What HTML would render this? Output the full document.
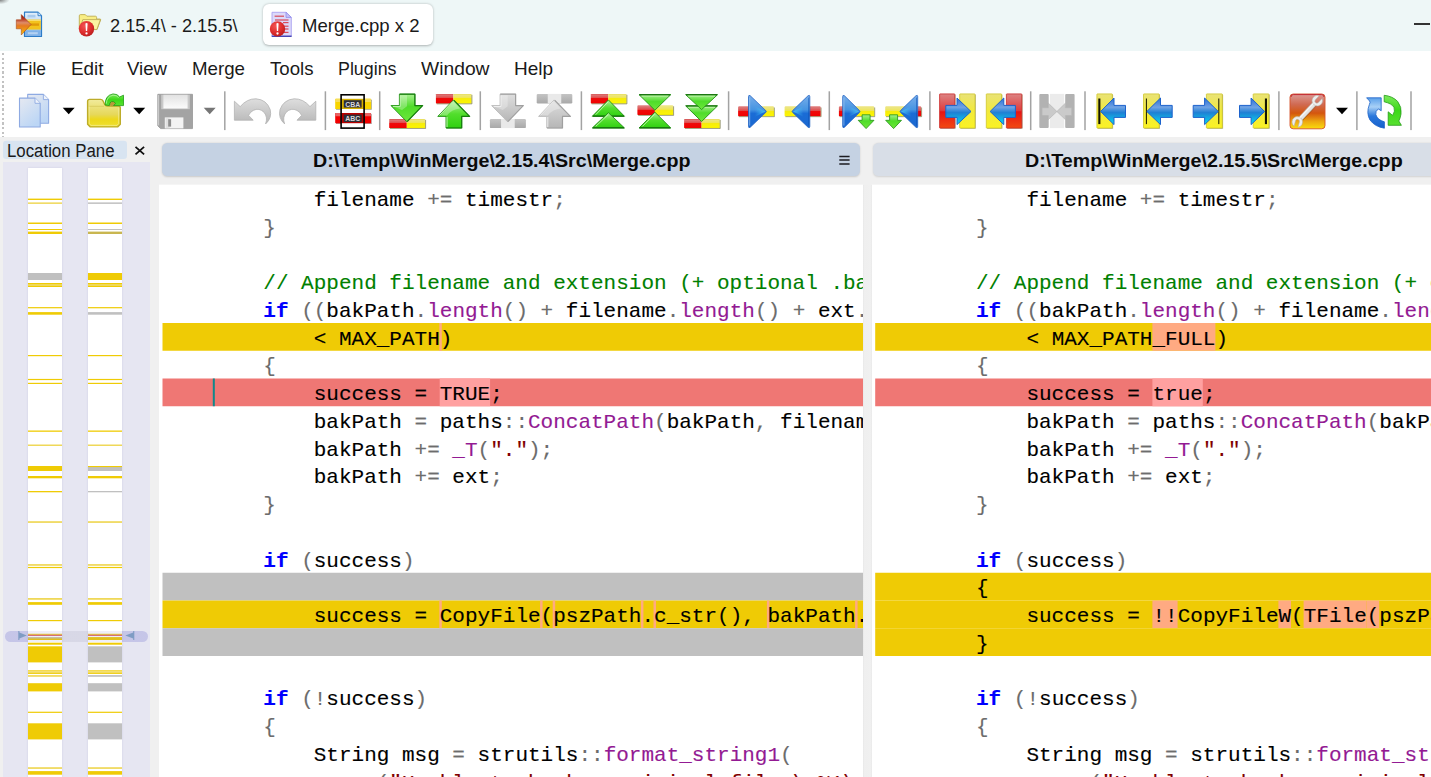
<!DOCTYPE html>
<html><head><meta charset="utf-8"><title>WinMerge</title>
<style>
html,body{margin:0;padding:0;}
body{width:1431px;height:777px;overflow:hidden;background:#f0f0f0;position:relative;font-family:"Liberation Sans",sans-serif;}
.a{position:absolute;}
.t{position:absolute;white-space:pre;transform-origin:0 0;font-family:"Liberation Sans",sans-serif;}
.sep{position:absolute;top:91.5px;height:38.5px;width:1.4px;background:#a9a9a9;}
.pane{position:absolute;top:184px;height:600px;overflow:hidden;}
.ln{-webkit-text-stroke:0.12px currentColor;position:absolute;left:0;width:900px;height:27.75px;line-height:27.75px;font-family:"Liberation Mono",monospace;font-size:21px;white-space:pre;color:#000;}
.ln i{font-style:normal;position:relative;top:2.6px;}
.ln b{font-weight:normal;position:relative;top:1.6px;}
.k{color:#0000ff;font-weight:bold !important;}
.o{color:#6c6c6c;}
.f{color:#931a93;}
.s{color:#800000;}
.c{color:#008000;}
.Y{background:#efcb05;}
.R{background:#ef7774;}
.G{background:#c0c0c0;}
.w{background:#ffa0a0;padding:3.58px 0 0.37px 0;}
.d{background:#ffaa82;padding:3.58px 0 0.37px 0;}
.ic{position:absolute;overflow:visible;}
</style></head><body>

<div class="a" style="left:0;top:0;width:1431px;height:51px;background:#eef7f7;"></div>
<div class="a" style="left:0;top:0;width:9px;height:4px;background:radial-gradient(ellipse at 0 0, rgba(80,80,80,0.7) 0, rgba(80,80,80,0.25) 45%, rgba(80,80,80,0) 75%);"></div>
<div class="a" style="left:262.5px;top:3.7px;width:170px;height:41.6px;background:#fff;border-radius:6px;box-shadow:0 0.5px 2.5px rgba(0,0,0,0.28);"></div>
<div class="t" style="left:110.30px;top:14.96px;font-size:18.5px;line-height:21.256px;color:#1a1a1a;transform:scaleX(0.9846);">2.15.4\ - 2.15.5\</div>
<div class="t" style="left:302.00px;top:14.96px;font-size:18.5px;line-height:21.256px;color:#1a1a1a;transform:scaleX(1.0032);">Merge.cpp x 2</div>
<div class="a" style="left:1414.3px;top:23.2px;width:15.5px;height:1.5px;background:#333;"></div>
<div class="a" style="left:0;top:51px;width:1431px;height:86px;background:#fff;"></div>
<div class="a" style="left:2px;top:52.5px;width:2px;height:84px;background:repeating-linear-gradient(to bottom,#c2c2c2 0,#c2c2c2 2.2px,#fff 2.2px,#fff 4.62px);"></div>
<div class="t" style="left:18.00px;top:57.66px;font-size:18.5px;line-height:21.256px;color:#1a1a1a;transform:scaleX(0.9393);">File</div>
<div class="t" style="left:71.00px;top:57.66px;font-size:18.5px;line-height:21.256px;color:#1a1a1a;transform:scaleX(1.0195);">Edit</div>
<div class="t" style="left:127.00px;top:57.66px;font-size:18.5px;line-height:21.256px;color:#1a1a1a;transform:scaleX(1.0059);">View</div>
<div class="t" style="left:192.00px;top:57.66px;font-size:18.5px;line-height:21.256px;color:#1a1a1a;transform:scaleX(1.0107);">Merge</div>
<div class="t" style="left:270.00px;top:57.66px;font-size:18.5px;line-height:21.256px;color:#1a1a1a;transform:scaleX(1.0072);">Tools</div>
<div class="t" style="left:338.00px;top:57.66px;font-size:18.5px;line-height:21.256px;color:#1a1a1a;transform:scaleX(0.9641);">Plugins</div>
<div class="t" style="left:421.00px;top:57.66px;font-size:18.5px;line-height:21.256px;color:#1a1a1a;transform:scaleX(1.0410);">Window</div>
<div class="t" style="left:514.00px;top:57.66px;font-size:18.5px;line-height:21.256px;color:#1a1a1a;transform:scaleX(1.0250);">Help</div>
<svg class="a" style="left:0;top:0" width="1431" height="140" viewBox="0 0 1431 140">
<defs>
<linearGradient id="gDoc" x1="0" y1="0" x2="0.6" y2="1"><stop offset="0" stop-color="#e6e9f1"/><stop offset="1" stop-color="#bcd6f5"/></linearGradient>
<linearGradient id="gFold" x1="0" y1="0" x2="0" y2="1"><stop offset="0" stop-color="#f1eb9c"/><stop offset="0.55" stop-color="#e6d85a"/><stop offset="0.72" stop-color="#ecd81c"/><stop offset="1" stop-color="#f0e030"/></linearGradient>
<linearGradient id="gGreen" x1="0" y1="0" x2="0" y2="1"><stop offset="0" stop-color="#a6f08e"/><stop offset="0.45" stop-color="#4fdc2a"/><stop offset="1" stop-color="#6ee83a"/></linearGradient>
<linearGradient id="gGreenT" x1="0" y1="0" x2="0" y2="1"><stop offset="0" stop-color="#b4f2a0"/><stop offset="0.5" stop-color="#52de2c"/><stop offset="1" stop-color="#2fd010"/></linearGradient>
<linearGradient id="gGrey" x1="0" y1="0" x2="0" y2="1"><stop offset="0" stop-color="#dedede"/><stop offset="1" stop-color="#b6b6b6"/></linearGradient>
<linearGradient id="gRedBar" x1="0" y1="0" x2="0" y2="1"><stop offset="0" stop-color="#d43c3c"/><stop offset="0.1" stop-color="#dc7878"/><stop offset="0.42" stop-color="#e04a4a"/><stop offset="0.48" stop-color="#ee0a0a"/><stop offset="1" stop-color="#f20000"/></linearGradient>
<linearGradient id="gYelBar" x1="0" y1="0" x2="0" y2="1"><stop offset="0" stop-color="#e6d83c"/><stop offset="0.1" stop-color="#ece684"/><stop offset="0.42" stop-color="#efe654"/><stop offset="0.48" stop-color="#f6ec0c"/><stop offset="1" stop-color="#fdf600"/></linearGradient>
<linearGradient id="gGreyBar" x1="0" y1="0" x2="0" y2="1"><stop offset="0" stop-color="#c4c4c4"/><stop offset="1" stop-color="#a8a8a8"/></linearGradient>
<linearGradient id="gBlue" x1="0" y1="0" x2="0" y2="1"><stop offset="0" stop-color="#78aeea"/><stop offset="0.44" stop-color="#4694e2"/><stop offset="0.56" stop-color="#1a6cd6"/><stop offset="1" stop-color="#1a68d0"/></linearGradient>
<linearGradient id="gBlueA" x1="0" y1="0" x2="0" y2="1"><stop offset="0" stop-color="#2c6fd6"/><stop offset="0.35" stop-color="#6fa2e4"/><stop offset="0.55" stop-color="#1f80d4"/><stop offset="0.8" stop-color="#10b4e4"/><stop offset="1" stop-color="#08e4f4"/></linearGradient>
<linearGradient id="gRedTall" x1="0" y1="0" x2="0" y2="1"><stop offset="0" stop-color="#dc8484"/><stop offset="0.5" stop-color="#e03a3a"/><stop offset="0.52" stop-color="#e81414"/><stop offset="1" stop-color="#f24a12"/></linearGradient>
<linearGradient id="gYelTall" x1="0" y1="0" x2="0" y2="1"><stop offset="0" stop-color="#e9e278"/><stop offset="0.5" stop-color="#f2ea3c"/><stop offset="1" stop-color="#faf224"/></linearGradient>
<linearGradient id="gOpt" x1="0" y1="0" x2="0" y2="1"><stop offset="0" stop-color="#dc9a96"/><stop offset="0.3" stop-color="#d06a52"/><stop offset="0.55" stop-color="#d4560e"/><stop offset="0.8" stop-color="#eeaa10"/><stop offset="1" stop-color="#fadc0c"/></linearGradient>
<linearGradient id="gSaveL" x1="0" y1="0" x2="0" y2="1"><stop offset="0" stop-color="#e2e2e2"/><stop offset="1" stop-color="#fbfbfb"/></linearGradient>
<linearGradient id="gArrowO" x1="0" y1="0" x2="0" y2="1"><stop offset="0" stop-color="#8a0c0c"/><stop offset="0.22" stop-color="#b83a26"/><stop offset="0.4" stop-color="#de8c68"/><stop offset="0.55" stop-color="#e67a20"/><stop offset="0.8" stop-color="#f0a010"/><stop offset="1" stop-color="#fad01c"/></linearGradient>
<linearGradient id="gWm" x1="0" y1="0" x2="0" y2="1"><stop offset="0" stop-color="#e4f0fb"/><stop offset="1" stop-color="#8fbdea"/></linearGradient>
<radialGradient id="gRedBall" cx="0.38" cy="0.32" r="0.75"><stop offset="0" stop-color="#f45454"/><stop offset="0.6" stop-color="#dc2c2c"/><stop offset="1" stop-color="#b41c1c"/></radialGradient>
<linearGradient id="gBlueR" x1="0" y1="0" x2="0" y2="1"><stop offset="0" stop-color="#5aa0ea"/><stop offset="0.3" stop-color="#a8d0f6"/><stop offset="0.6" stop-color="#2a78dc"/><stop offset="1" stop-color="#1660cc"/></linearGradient>
<linearGradient id="gCyR" x1="0" y1="0" x2="1" y2="0"><stop offset="0.35" stop-color="#48c8f6" stop-opacity="0"/><stop offset="1" stop-color="#48c8f6" stop-opacity="0.85"/></linearGradient>
<linearGradient id="gCyL" x1="1" y1="0" x2="0" y2="0"><stop offset="0.35" stop-color="#48c8f6" stop-opacity="0"/><stop offset="1" stop-color="#48c8f6" stop-opacity="0.85"/></linearGradient>
<linearGradient id="gGreenR" x1="0" y1="0" x2="0" y2="1"><stop offset="0" stop-color="#7cea5c"/><stop offset="0.5" stop-color="#3cd818"/><stop offset="1" stop-color="#58e030"/></linearGradient>
</defs>
<rect x="224.05" y="91.3" width="1.5" height="38.8" fill="#a3a3a3"/>
<rect x="324.65" y="91.3" width="1.5" height="38.8" fill="#a3a3a3"/>
<rect x="378.95" y="91.3" width="1.5" height="38.8" fill="#a3a3a3"/>
<rect x="479.55" y="91.3" width="1.5" height="38.8" fill="#a3a3a3"/>
<rect x="580.65" y="91.3" width="1.5" height="38.8" fill="#a3a3a3"/>
<rect x="727.85" y="91.3" width="1.5" height="38.8" fill="#a3a3a3"/>
<rect x="828.55" y="91.3" width="1.5" height="38.8" fill="#a3a3a3"/>
<rect x="929.15" y="91.3" width="1.5" height="38.8" fill="#a3a3a3"/>
<rect x="1029.95" y="91.3" width="1.5" height="38.8" fill="#a3a3a3"/>
<rect x="1084.25" y="91.3" width="1.5" height="38.8" fill="#a3a3a3"/>
<rect x="1278.15" y="91.3" width="1.5" height="38.8" fill="#a3a3a3"/>
<rect x="1356.15" y="91.3" width="1.5" height="38.8" fill="#a3a3a3"/>
<rect x="1410.25" y="91.3" width="1.5" height="38.8" fill="#a3a3a3"/>
<g>
<path d="M24.5 12.2 H38 L41.5 15.7 V36.5 H24.5 Z" fill="url(#gWm)" stroke="#2c7cc8" stroke-width="1.2" stroke-linejoin="round"/>
<path d="M38 12.2 V15.7 H41.5" fill="#d8e8f8" stroke="#2c7cc8" stroke-width="0.9"/>
<rect x="27.5" y="14.8" width="8" height="2.6" fill="#a9cbee"/>
<rect x="25.1" y="30.3" width="15.8" height="5.7" fill="#7fb2e8"/><rect x="27.8" y="32.2" width="10" height="2.1" fill="#b4d2f2"/>
<rect x="25.2" y="19.6" width="15.6" height="10" fill="#f3c31c"/>
<rect x="25.2" y="19.6" width="15.6" height="1.3" fill="#f8e07a"/>
<rect x="30" y="23.4" width="9" height="2.4" fill="#e09a08"/>
<path d="M16.3 19.8 H21.3 V14.6 L31 24.5 L21.3 35 V28.8 H16.3 Z" fill="url(#gArrowO)" stroke="#a8481c" stroke-width="0.6" stroke-linejoin="round"/>
</g>
<g>
<path d="M79.3 29.5 V15.8 Q79.3 14.6 80.6 14.6 H85.3 L86.8 16.2 H95.4 Q96.6 16.2 96.6 17.4 V19 H100 Q101 19 100.6 20 L97 29.5 Z" fill="#f8ee84" stroke="#bfae50" stroke-width="0.9"/>
<path d="M82.8 19.6 H100.4 L96.8 29.6 H79.6 Z" fill="#fbf4a2" stroke="#b8a650" stroke-width="0.8"/>
<circle cx="86.5" cy="28.8" r="7.7" fill="url(#gRedBall)"/>
<path d="M85.4 23.4 Q86.5 22.6 87.6 23.4 L87.1 31 H85.9 Z" fill="#fff"/><circle cx="86.5" cy="33.4" r="1.15" fill="#fff"/>
</g>
<g>
<path d="M272 12.3 H286 L291.3 17.4 V36.3 H272 Z" fill="#dcd9fa" stroke="#aaa2f0" stroke-width="0.9"/>
<path d="M286 12.3 V17.4 H291.3 Z" fill="#c6c2f6" stroke="#8a84ec" stroke-width="0.7"/>
<rect x="271.7" y="35.6" width="19.9" height="1.3" fill="#3a3aae"/>
<rect x="274.6" y="15.6" width="9.399999999999977" height="1.2" fill="#d84a5a"/>
<rect x="275" y="19.4" width="13.5" height="1.2" fill="#d84a5a"/>
<rect x="283" y="22.0" width="5.5" height="1.2" fill="#d84a5a"/>
<rect x="284" y="25.599999999999998" width="4.5" height="1.2" fill="#d84a5a"/>
<rect x="285" y="28.4" width="3.5" height="1.2" fill="#d84a5a"/>
<rect x="284" y="31.799999999999997" width="4.5" height="1.2" fill="#d84a5a"/>
<circle cx="277.5" cy="28.9" r="7.7" fill="url(#gRedBall)"/>
<path d="M276.4 23.5 Q277.5 22.7 278.6 23.5 L278.1 31.1 H276.9 Z" fill="#fff"/><circle cx="277.5" cy="33.5" r="1.15" fill="#fff"/>
</g>
<path d="M27.7 94.4 H43.4 L48.6 99.60000000000001 V123.3 H27.7 Z" fill="url(#gDoc)" stroke="#8eaae2" stroke-width="1.1" stroke-linejoin="round"/><path d="M43.4 94.4 V99.60000000000001 H48.6" fill="#eef3fb" stroke="#8eaae2" stroke-width="0.9" stroke-linejoin="round"/>
<path d="M19.5 98.1 H35.0 L40.2 103.3 V127 H19.5 Z" fill="url(#gDoc)" stroke="#8eaae2" stroke-width="1.1" stroke-linejoin="round"/><path d="M35.0 98.1 V103.3 H40.2" fill="#eef3fb" stroke="#8eaae2" stroke-width="0.9" stroke-linejoin="round"/>
<path d="M62.7 107.7 H74.7 L68.7 114.3 Z" fill="#000"/>
<path d="M133.2 107.7 H145.2 L139.2 114.3 Z" fill="#000"/>
<path d="M203.7 107.7 H215.7 L209.7 114.3 Z" fill="#767676"/>
<path d="M1336 107.7 H1348 L1342 114.3 Z" fill="#000"/>
<path d="M87.6 124.2 V101.4 Q87.6 99.4 89.6 99.4 H100.6 Q102.2 99.4 102.9 100.8 L104.8 104.6 Q105.5 106 107.2 106 H118.3 Q120.3 106 120.3 108 V124.2 L117.6 126.9 H90.3 Z" fill="url(#gFold)" stroke="#bdac2a" stroke-width="1.4" stroke-linejoin="round"/>
<path d="M89.6 106.3 H104 " stroke="#d8cc60" stroke-width="0.9" fill="none"/>
<path d="M89.2 106.8 V123.6 L91 125.4 H116.9 L118.7 123.6 V107.6" stroke="#f6f0a8" stroke-width="0.9" fill="none" opacity="0.7"/>
<ellipse cx="112.4" cy="103.6" rx="3.4" ry="2.6" fill="#b69a3a"/>
<path d="M105.2 105 Q104.8 95.4 113 93.9 Q117.6 93.8 119.6 97 L123.5 95.2 V105.6 H113.6 L115.6 103.4 Q113.8 100.7 111.4 101.6 Q109.4 102.6 109.4 105.6 Z" fill="url(#gGreenR)" stroke="#1f9a14" stroke-width="0.8" stroke-linejoin="round"/>
<path d="M106.4 103.6 Q106.6 96.6 113 95.2 Q116.6 95 118.6 97.6" stroke="#b6f4a2" stroke-width="1" fill="none" opacity="0.8"/>
<path d="M157.8 94.3 H192.5 V128.6 H160.6 L157.8 125.8 Z" fill="#a3a3a3" stroke="#979797" stroke-width="0.8"/>
<path d="M158.6 95 V125.4" stroke="#cfcfcf" stroke-width="1"/>
<rect x="161.2" y="94.8" width="28.6" height="14.4" fill="#c9c9c9"/>
<rect x="163.4" y="94.8" width="24.2" height="13.6" fill="url(#gSaveL)"/>
<rect x="164.8" y="117.4" width="18.6" height="11" fill="#f3f3f3"/>
<rect x="165.6" y="118.2" width="4" height="10" fill="#e0e0e0"/>
<rect x="168.2" y="119.2" width="2.9" height="7.4" fill="#8e8e8e"/>
<path d="M234.4 101.2 L240.2 106.6 Q247 98.6 256 98.8 Q266.6 99.6 270.2 109.6 Q272.2 118.2 265.6 123.9 Q268 117.4 264.2 112.4 Q259.2 107.4 253.2 110.4 Q250 112.2 248.6 115.4 L253.2 120.2 H234.4 Z" fill="url(#gGrey)" stroke="#b3b3b3" stroke-width="0.8" stroke-linejoin="round"/>
<g transform="translate(550.2,0) scale(-1,1)"><path d="M234.4 101.2 L240.2 106.6 Q247 98.6 256 98.8 Q266.6 99.6 270.2 109.6 Q272.2 118.2 265.6 123.9 Q268 117.4 264.2 112.4 Q259.2 107.4 253.2 110.4 Q250 112.2 248.6 115.4 L253.2 120.2 H234.4 Z" fill="url(#gGrey)" stroke="#b3b3b3" stroke-width="0.8" stroke-linejoin="round"/></g>
<rect x="336" y="99.6" width="35.8" height="10.2" rx="0.6" fill="#6a6a2c" opacity="0.6"/>
<rect x="336" y="113.8" width="35.8" height="10.2" rx="0.6" fill="#6a2c2c" opacity="0.5"/>
<rect x="335.2" y="98.8" width="35.8" height="10.2" rx="0.6" fill="#f8d400"/>
<rect x="335.2" y="98.8" width="35.8" height="3.2" rx="0.6" fill="#f6de5a"/>
<rect x="335.2" y="113" width="35.8" height="10.2" rx="0.6" fill="#f20000"/>
<rect x="335.2" y="113" width="35.8" height="3.2" rx="0.6" fill="#e86464"/>
<rect x="341.2" y="95" width="22.8" height="33" fill="#fff"/>
<rect x="341.2" y="98.8" width="22.8" height="10.2" fill="#d4ae00"/>
<rect x="341.2" y="113" width="22.8" height="10.2" fill="#b80000"/>
<rect x="343.8" y="100.2" width="17.8" height="7.4" fill="#2e2e36"/>
<rect x="343.8" y="114.6" width="17.8" height="7.4" fill="#2e2e36"/>
<text x="352.7" y="106.7" font-family="Liberation Sans, sans-serif" font-weight="bold" font-size="7.6" fill="#d6d6dc" text-anchor="middle" textLength="15" lengthAdjust="spacingAndGlyphs">CBA</text>
<text x="352.7" y="121.1" font-family="Liberation Sans, sans-serif" font-weight="bold" font-size="7.6" fill="#d6d6dc" text-anchor="middle" textLength="15" lengthAdjust="spacingAndGlyphs">ABC</text>
<rect x="341.1" y="94.8" width="23" height="33.3" fill="none" stroke="#000" stroke-width="1.6"/>
<path d="M389.9 119 H406.8 V128.1 H389.9 Q389.2 128.1 389.2 127.39999999999999 V119.7 Q389.2 119 389.9 119 Z" fill="url(#gRedBar)"/><path d="M406.8 119 H424.5 Q425.2 119 425.2 119.7 V127.39999999999999 Q425.2 128.1 424.5 128.1 H406.8 Z" fill="url(#gYelBar)"/><path d="M390.0 128.45 H425.59999999999997 M425.59999999999997 119.9 V128.5" stroke="#66662c" stroke-width="0.9" opacity="0.7" fill="none"/><path d="M399.4 94.2 H414.9 V105.6 H422.6 L406.9 121.8 L391 105.6 H399.4 Z" fill="url(#gGreen)" stroke="#1f8f12" stroke-width="0.9" stroke-linejoin="round"/><path d="M400.4 95.2 H407 V106.2 L402 110 L393.6 106.6 H400.4 Z" fill="#ffffff" opacity="0.28"/><path d="M399.6 94.2 H414.9 V105.6 H422.6 L407.2 121.6" fill="none" stroke="#127a0a" stroke-width="1.2" stroke-linejoin="round" opacity="0.9"/><path d="M400.3 95.4 V106.5 H393" fill="none" stroke="#c4f4b4" stroke-width="1" opacity="0.9"/>
<path d="M436.59999999999997 93.9 H453.4 V103.5 H436.59999999999997 Q435.9 103.5 435.9 102.8 V94.60000000000001 Q435.9 93.9 436.59999999999997 93.9 Z" fill="url(#gRedBar)"/><path d="M453.4 93.9 H470.8 Q471.5 93.9 471.5 94.60000000000001 V102.8 Q471.5 103.5 470.8 103.5 H453.4 Z" fill="url(#gYelBar)"/><path d="M436.7 103.85 H471.9 M471.9 94.80000000000001 V103.9" stroke="#66662c" stroke-width="0.9" opacity="0.7" fill="none"/><path d="M453.5 99.9 L469.6 116.4 H461.7 V128 H446 V116.4 H437.8 Z" fill="url(#gGreenT)" stroke="#1f8f12" stroke-width="0.9" stroke-linejoin="round"/><path d="M453.4 101.8 L460 108.6 Q452 109.4 447 115.4 H440.4 Z" fill="#ffffff" opacity="0.3"/><path d="M454 100.4 L469.6 116.4 H461.7 V128 H446.4" fill="none" stroke="#127a0a" stroke-width="1.2" stroke-linejoin="round" opacity="0.9"/><path d="M453 101.4 L439.6 115.4 M447 117 V127" fill="none" stroke="#d0f8c2" stroke-width="1" opacity="0.9"/>
<rect x="489.9" y="119" width="36.0" height="9.099999999999994" rx="1.2" fill="url(#gGreyBar)"/><rect x="501.06" y="119" width="13.68" height="9.099999999999994" fill="#e9e9e9"/><path d="M500.09999999999997 94.2 H515.6 V105.6 H523.3000000000001 L507.59999999999997 121.8 L491.7 105.6 H500.09999999999997 Z" fill="url(#gGrey)" stroke="#b9b9b9" stroke-width="0.9" stroke-linejoin="round"/><path d="M501.09999999999997 95.2 H507.7 V106.2 L502.7 110 L494.3 106.6 H501.09999999999997 Z" fill="#ffffff" opacity="0.28"/><path d="M500.3 94.2 H515.6 V105.6 H523.3000000000001 L507.9 121.6" fill="none" stroke="#9c9c9c" stroke-width="1.2" stroke-linejoin="round" opacity="0.9"/><path d="M501.0 95.4 V106.5 H493.7" fill="none" stroke="#f2f2f2" stroke-width="1" opacity="0.9"/>
<rect x="536.6999999999999" y="93.9" width="35.60000000000002" height="9.599999999999994" rx="1.2" fill="url(#gGreyBar)"/><rect x="547.736" y="93.9" width="13.52800000000001" height="9.599999999999994" fill="#e9e9e9"/><path d="M554.3 99.9 L570.4 116.4 H562.5 V128 H546.8 V116.4 H538.6 Z" fill="url(#gGrey)" stroke="#b9b9b9" stroke-width="0.9" stroke-linejoin="round"/><path d="M554.1999999999999 101.8 L560.8 108.6 Q552.8 109.4 547.8 115.4 H541.1999999999999 Z" fill="#ffffff" opacity="0.3"/><path d="M554.8 100.4 L570.4 116.4 H562.5 V128 H547.1999999999999" fill="none" stroke="#9c9c9c" stroke-width="1.2" stroke-linejoin="round" opacity="0.9"/><path d="M553.8 101.4 L540.4 115.4 M547.8 117 V127" fill="none" stroke="#f4f4f4" stroke-width="1" opacity="0.9"/>
<path d="M591.5 93.9 H608.3 V103.5 H591.5 Q590.8 103.5 590.8 102.8 V94.60000000000001 Q590.8 93.9 591.5 93.9 Z" fill="url(#gRedBar)"/><path d="M608.3 93.9 H625.8 Q626.5 93.9 626.5 94.60000000000001 V102.8 Q626.5 103.5 625.8 103.5 H608.3 Z" fill="url(#gYelBar)"/><path d="M591.5999999999999 103.85 H626.9 M626.9 94.80000000000001 V103.9" stroke="#66662c" stroke-width="0.9" opacity="0.7" fill="none"/>
<path d="M608.4 99.9 L624.5 116.3 H592.3 Z" fill="url(#gGreenT)" stroke="#1f8f12" stroke-width="0.9" stroke-linejoin="round"/><path d="M592.8 116.1 H624.0" stroke="#156f0c" stroke-width="1.3"/><path d="M608.1 101.9 L595.6999999999999 114.7" stroke="#d2f8c4" stroke-width="1" opacity="0.85"/>
<path d="M608.4 112.7 L624.5 128 H592.3 Z" fill="url(#gGreenT)" stroke="#1f8f12" stroke-width="0.9" stroke-linejoin="round"/><path d="M592.8 127.8 H624.0" stroke="#156f0c" stroke-width="1.3"/><path d="M608.1 114.7 L595.6999999999999 126.4" stroke="#d2f8c4" stroke-width="1" opacity="0.85"/>
<path d="M638.1 105.4 H654.9 V115 H638.1 Q637.4 115 637.4 114.3 V106.10000000000001 Q637.4 105.4 638.1 105.4 Z" fill="url(#gRedBar)"/><path d="M654.9 105.4 H672.5 Q673.2 105.4 673.2 106.10000000000001 V114.3 Q673.2 115 672.5 115 H654.9 Z" fill="url(#gYelBar)"/><path d="M638.1999999999999 115.35 H673.6 M673.6 106.30000000000001 V115.4" stroke="#66662c" stroke-width="0.9" opacity="0.7" fill="none"/>
<path d="M639.0 94.6 H670.8 L654.9 110.2 Z" fill="url(#gGreen)" stroke="#1f8f12" stroke-width="0.9" stroke-linejoin="round"/><path d="M639.5 94.8 H670.3" stroke="#156f0c" stroke-width="1.3"/><path d="M641.6 96.1 H668.1999999999999" stroke="#c8f6b8" stroke-width="0.9" opacity="0.8"/>
<path d="M654.9 112.2 L670.8 128 H639.0 Z" fill="url(#gGreenT)" stroke="#1f8f12" stroke-width="0.9" stroke-linejoin="round"/><path d="M639.5 127.8 H670.3" stroke="#156f0c" stroke-width="1.3"/><path d="M654.6 114.2 L642.4 126.4" stroke="#d2f8c4" stroke-width="1" opacity="0.85"/>
<path d="M684.8000000000001 119 H701.6 V128.1 H684.8000000000001 Q684.1 128.1 684.1 127.39999999999999 V119.7 Q684.1 119 684.8000000000001 119 Z" fill="url(#gRedBar)"/><path d="M701.6 119 H719.0999999999999 Q719.8 119 719.8 119.7 V127.39999999999999 Q719.8 128.1 719.0999999999999 128.1 H701.6 Z" fill="url(#gYelBar)"/><path d="M684.9 128.45 H720.1999999999999 M720.1999999999999 119.9 V128.5" stroke="#66662c" stroke-width="0.9" opacity="0.7" fill="none"/>
<path d="M685.6 105.8 H717.6 L701.6 121.5 Z" fill="url(#gGreen)" stroke="#1f8f12" stroke-width="0.9" stroke-linejoin="round"/><path d="M686.1 106.0 H717.1" stroke="#156f0c" stroke-width="1.3"/><path d="M688.2 107.3 H715.0" stroke="#c8f6b8" stroke-width="0.9" opacity="0.8"/>
<path d="M685.6 94.6 H717.6 L701.6 109.6 Z" fill="url(#gGreen)" stroke="#1f8f12" stroke-width="0.9" stroke-linejoin="round"/><path d="M686.1 94.8 H717.1" stroke="#156f0c" stroke-width="1.3"/><path d="M688.2 96.1 H715.0" stroke="#c8f6b8" stroke-width="0.9" opacity="0.8"/>
<rect x="738.1" y="106.6" width="13.899999999999977" height="9.7" rx="0.9" fill="url(#gRedBar)"/><path d="M738.9 116.65 H752.4 M752.4 107.5 V116.7" stroke="#66662c" stroke-width="0.9" opacity="0.65" fill="none"/>
<rect x="760" y="106.6" width="14" height="9.7" rx="0.9" fill="url(#gYelBar)"/><path d="M760.8 116.65 H774.4 M774.4 107.5 V116.7" stroke="#66662c" stroke-width="0.9" opacity="0.65" fill="none"/>
<path d="M748.5 96.6 Q748.5 94.6 750.3 95.8 L765.8 110.6 Q766.8 111.5 765.8 112.4 L750.3 127.2 Q748.5 128.4 748.5 126.4 Z" fill="url(#gBlue)" stroke="#2464c4" stroke-width="0.8" stroke-linejoin="round"/><path d="M749.5 103.5 L765.4 111.5 L749.5 119.5 Z" fill="url(#gCyR)"/><path d="M749.7 97.6 V125.6" stroke="#9cc4f0" stroke-width="0.9" opacity="0.8"/>
<rect x="784.6" y="106.6" width="13.399999999999977" height="9.7" rx="0.9" fill="url(#gYelBar)"/><path d="M785.4 116.65 H798.4 M798.4 107.5 V116.7" stroke="#66662c" stroke-width="0.9" opacity="0.65" fill="none"/>
<rect x="806" y="106.6" width="14.700000000000045" height="9.7" rx="0.9" fill="url(#gRedBar)"/><path d="M806.8 116.65 H821.1 M821.1 107.5 V116.7" stroke="#66662c" stroke-width="0.9" opacity="0.65" fill="none"/>
<path d="M809.8 96.6 Q809.8 94.6 808.0 95.8 L792.6 110.6 Q791.6 111.5 792.6 112.4 L808.0 127.2 Q809.8 128.4 809.8 126.4 Z" fill="url(#gBlue)" stroke="#2464c4" stroke-width="0.8" stroke-linejoin="round"/><path d="M808.8 103.5 L793 111.5 L808.8 119.5 Z" fill="url(#gCyL)"/><path d="M808.5999999999999 97.6 V125.6" stroke="#0c50b4" stroke-width="0.9" opacity="0.6"/>
<rect x="838.9" y="106.6" width="7.100000000000023" height="9.7" rx="0.9" fill="url(#gRedBar)"/><path d="M839.6999999999999 116.65 H846.4 M846.4 107.5 V116.7" stroke="#66662c" stroke-width="0.9" opacity="0.65" fill="none"/>
<rect x="852" y="106.6" width="22.299999999999955" height="9.7" rx="0.9" fill="url(#gYelBar)"/><path d="M852.8 116.65 H874.6999999999999 M874.6999999999999 107.5 V116.7" stroke="#66662c" stroke-width="0.9" opacity="0.65" fill="none"/>
<path d="M842.7 96.6 Q842.7 94.6 844.5 95.8 L859.5 110.6 Q860.5 111.5 859.5 112.4 L844.5 127.2 Q842.7 128.4 842.7 126.4 Z" fill="url(#gBlue)" stroke="#2464c4" stroke-width="0.8" stroke-linejoin="round"/><path d="M843.7 103.5 L859.1 111.5 L843.7 119.5 Z" fill="url(#gCyR)"/><path d="M843.9000000000001 97.6 V125.6" stroke="#9cc4f0" stroke-width="0.9" opacity="0.8"/>
<path d="M862.1 114.8 H870.1 V120.3 H874.0 L866.1 128.6 L858.2 120.3 H862.1 Z" fill="url(#gGreen)" stroke="#1f8f12" stroke-width="0.8" stroke-linejoin="round"/>
<rect x="885.2" y="106.6" width="22.799999999999955" height="9.7" rx="0.9" fill="url(#gYelBar)"/><path d="M886.0 116.65 H908.4 M908.4 107.5 V116.7" stroke="#66662c" stroke-width="0.9" opacity="0.65" fill="none"/>
<rect x="914" y="106.6" width="7.2000000000000455" height="9.7" rx="0.9" fill="url(#gRedBar)"/><path d="M914.8 116.65 H921.6 M921.6 107.5 V116.7" stroke="#66662c" stroke-width="0.9" opacity="0.65" fill="none"/>
<path d="M917.7 96.6 Q917.7 94.6 915.9000000000001 95.8 L900.5 110.6 Q899.5 111.5 900.5 112.4 L915.9000000000001 127.2 Q917.7 128.4 917.7 126.4 Z" fill="url(#gBlue)" stroke="#2464c4" stroke-width="0.8" stroke-linejoin="round"/><path d="M916.7 103.5 L900.9 111.5 L916.7 119.5 Z" fill="url(#gCyL)"/><path d="M916.5 97.6 V125.6" stroke="#0c50b4" stroke-width="0.9" opacity="0.6"/>
<path d="M889.6 114.8 H897.6 V120.3 H901.5 L893.6 128.6 L885.7 120.3 H889.6 Z" fill="url(#gGreen)" stroke="#1f8f12" stroke-width="0.8" stroke-linejoin="round"/>
<rect x="940.4" y="94.6" width="15.199999999999932" height="34.2" rx="0.4" fill="#6a6a28" opacity="0.55"/><rect x="939.6" y="93.9" width="15.199999999999932" height="34.2" rx="0.4" fill="url(#gRedTall)" stroke="#cc2a2a" stroke-width="0.8"/>
<rect x="960.5" y="94.6" width="15.299999999999955" height="34.2" rx="0.4" fill="#6a6a28" opacity="0.55"/><rect x="959.7" y="93.9" width="15.299999999999955" height="34.2" rx="0.4" fill="url(#gYelTall)" stroke="#cfc62a" stroke-width="0.8"/>
<path d="M945.8 105.4 H957 V98 L971 111.5 L957 124.6 V117.4 H945.8 Z" fill="url(#gBlueA)" stroke="#1c62cc" stroke-width="1" stroke-linejoin="round"/>
<rect x="987.0999999999999" y="94.6" width="15.300000000000068" height="34.2" rx="0.4" fill="#6a6a28" opacity="0.55"/><rect x="986.3" y="93.9" width="15.300000000000068" height="34.2" rx="0.4" fill="url(#gYelTall)" stroke="#cfc62a" stroke-width="0.8"/>
<rect x="1007.1999999999999" y="94.6" width="15.399999999999977" height="34.2" rx="0.4" fill="#6a6a28" opacity="0.55"/><rect x="1006.4" y="93.9" width="15.399999999999977" height="34.2" rx="0.4" fill="url(#gRedTall)" stroke="#cc2a2a" stroke-width="0.8"/>
<path d="M1015.4 105.4 H1003.8 V98 L990.1 111.5 L1003.8 124.6 V117.4 H1015.4 Z" fill="url(#gBlueA)" stroke="#1c62cc" stroke-width="1" stroke-linejoin="round"/>
<rect x="1039.3" y="93.9" width="9.4" height="34.2" rx="1" fill="#b2b2b2"/>
<rect x="1050" y="93.9" width="14.2" height="34.2" fill="#ebebeb"/>
<rect x="1065.2" y="93.9" width="9.4" height="34.2" rx="1" fill="#b2b2b2"/>
<path d="M1042 107.7 H1048.4 V103.2 L1056.9 111.5 L1048.4 119.6 V115.6 H1042 Z" fill="#cacaca" stroke="#b4b4b4" stroke-width="0.7"/>
<path d="M1071.8 107.7 H1065.4 V103.2 L1056.9 111.5 L1065.4 119.6 V115.6 H1071.8 Z" fill="#cacaca" stroke="#b4b4b4" stroke-width="0.7"/>
<rect x="1097.7" y="94.6" width="15.399999999999864" height="34.2" rx="0.4" fill="#6a6a28" opacity="0.55"/><rect x="1096.9" y="93.9" width="15.399999999999864" height="34.2" rx="0.4" fill="url(#gYelTall)" stroke="#cfc62a" stroke-width="0.8"/><rect x="1098.3" y="98.5" width="2.1" height="25.6" fill="#151500"/><path d="M1125.5 105.4 H1114 V98 L1100.6 111.5 L1114 124.6 V117.4 H1125.5 Z" fill="url(#gBlueA)" stroke="#1c62cc" stroke-width="1" stroke-linejoin="round"/>
<rect x="1144.3" y="94.6" width="15.700000000000045" height="34.2" rx="0.4" fill="#6a6a28" opacity="0.55"/><rect x="1143.5" y="93.9" width="15.700000000000045" height="34.2" rx="0.4" fill="url(#gYelTall)" stroke="#cfc62a" stroke-width="0.8"/><rect x="1145.9" y="98.5" width="1" height="25.6" fill="#151500"/><path d="M1172.2 105.4 H1160.5 V98 L1146.8 111.5 L1160.5 124.6 V117.4 H1172.2 Z" fill="url(#gBlueA)" stroke="#1c62cc" stroke-width="1" stroke-linejoin="round"/>
<rect x="1207.2" y="94.6" width="15.899999999999864" height="34.2" rx="0.4" fill="#6a6a28" opacity="0.55"/><rect x="1206.4" y="93.9" width="15.899999999999864" height="34.2" rx="0.4" fill="url(#gYelTall)" stroke="#cfc62a" stroke-width="0.8"/><rect x="1218.3" y="98.5" width="1" height="25.6" fill="#151500"/><path d="M1193.2 105.4 H1204.6 V98 L1218.3 111.5 L1204.6 124.6 V117.4 H1193.2 Z" fill="url(#gBlueA)" stroke="#1c62cc" stroke-width="1" stroke-linejoin="round"/>
<rect x="1254.0" y="94.6" width="15.700000000000045" height="34.2" rx="0.4" fill="#6a6a28" opacity="0.55"/><rect x="1253.2" y="93.9" width="15.700000000000045" height="34.2" rx="0.4" fill="url(#gYelTall)" stroke="#cfc62a" stroke-width="0.8"/><rect x="1264.9" y="98.5" width="2.1" height="25.6" fill="#151500"/><path d="M1239.5 105.4 H1251.1 V98 L1264.6 111.5 L1251.1 124.6 V117.4 H1239.5 Z" fill="url(#gBlueA)" stroke="#1c62cc" stroke-width="1" stroke-linejoin="round"/>
<rect x="1290" y="94" width="35" height="34.8" rx="3.2" fill="url(#gOpt)" stroke="#d4542a" stroke-width="0.9"/>
<path d="M1291 97 Q1291 94.6 1293.4 94.6 H1321.6 Q1324 94.6 1324 97" stroke="#c42c34" stroke-width="1" fill="none"/>
<g transform="translate(1307.3,111.3) rotate(-46.8)"><g transform="translate(0.9,0.9)" opacity="0.35"><path d="M-10.5 -2.2 H10.5 V2.2 H-10.5 Z" fill="#5a2a00"/></g><path d="M-10.5 -2.2 H10.5 V2.2 H-10.5 Z" fill="#e4e4e4" stroke="#b4b0a8" stroke-width="0.5"/><path d="M19.51 2.0 A5.3 5.3 0 1 1 19.51 -2.0 L14.0 -2.0 A2.0 2.0 0 0 0 14.0 2.0 Z" fill="#ededed" stroke="#b4b0a8" stroke-width="0.5"/><g transform="scale(-1,1) rotate(28 14.6 0)"><path d="M19.51 2.0 A5.3 5.3 0 1 1 19.51 -2.0 L14.0 -2.0 A2.0 2.0 0 0 0 14.0 2.0 Z" fill="#ededed" stroke="#b4b0a8" stroke-width="0.5"/></g><path d="M-10 -1 H10" stroke="#ffffff" stroke-width="1" opacity="0.8"/></g>
<path d="M1366.6 97.8 H1381.2 V110.8 L1378.4 108.9 Q1375.2 111 1375.8 114.6 Q1377.4 120 1384.4 121.8 V128.2 Q1375 126.8 1370 120 Q1366 113 1369.4 104.4 Q1370.6 102 1369.6 101 Z" fill="url(#gBlueR)" stroke="#1c62c8" stroke-width="0.8" stroke-linejoin="round"/>
<path d="M1384.2 95.3 Q1392.6 96.2 1397.6 101.4 Q1402 107 1401 114 Q1400.4 118 1398.8 121 L1401.4 125.3 H1388.2 V111.8 L1392.6 115.4 Q1395.6 111 1394 107.4 Q1392 103.6 1384.2 101.8 Z" fill="url(#gGreenR)" stroke="#239a16" stroke-width="0.8" stroke-linejoin="round"/>
</svg>
<svg class="a" style="left:0;top:138px" width="130" height="24" viewBox="0 138 130 24"><rect x="3" y="140.8" width="124" height="18.2" rx="3.2" fill="#d8e4f1"/></svg>
<div class="t" style="left:6.50px;top:141.21px;font-size:18px;line-height:20.682px;color:#1a1a1a;transform:scaleX(0.9340);">Location Pane</div>
<svg class="ic" style="left:134px;top:144.5px" width="12" height="12" viewBox="0 0 12 12"><path d="M1.5 1.9 L10.1 9.4 M10.1 1.9 L1.5 9.4" stroke="#111" stroke-width="1.8" fill="none"/></svg>
<div class="a" style="left:3px;top:162px;width:147px;height:620px;background:#e6e6f2;"></div>
<div class="a" style="left:28px;top:168px;width:34px;height:620px;background:#fff;box-shadow:0 0 1.5px rgba(200,200,225,0.9);"></div>
<div class="a" style="left:88px;top:168px;width:34px;height:620px;background:#fff;box-shadow:0 0 1.5px rgba(200,200,225,0.9);"></div>
<svg class="a" style="left:0;top:0" width="160" height="777" viewBox="0 0 160 777">
<rect x="28" y="198.60" width="34" height="1.40" fill="#efcb05"/><rect x="88" y="198.60" width="34" height="1.40" fill="#efcb05"/>
<rect x="28" y="202.40" width="34" height="1.50" fill="#efd858"/><rect x="88" y="202.40" width="34" height="1.50" fill="#c0c0c0"/>
<rect x="28" y="222.50" width="34" height="1.50" fill="#efcb05"/><rect x="88" y="222.50" width="34" height="1.50" fill="#efcb05"/>
<rect x="28" y="229.00" width="34" height="1.00" fill="#efcb05"/><rect x="88" y="229.00" width="34" height="1.00" fill="#c0c0c0"/>
<rect x="28" y="231.60" width="34" height="2.40" fill="#efcb05"/><rect x="88" y="231.60" width="34" height="2.40" fill="#c9b650"/>
<rect x="28" y="273.00" width="34" height="7.00" fill="#c0c0c0"/><rect x="88" y="273.00" width="34" height="7.00" fill="#efcb05"/>
<rect x="28" y="283.00" width="34" height="1.00" fill="#efcb05"/><rect x="88" y="283.00" width="34" height="1.00" fill="#efcb05"/>
<rect x="28" y="284.00" width="34" height="2.00" fill="#efd858"/><rect x="88" y="284.00" width="34" height="2.00" fill="#efd858"/>
<rect x="28" y="286.00" width="34" height="1.00" fill="#efcb05"/><rect x="88" y="286.00" width="34" height="1.00" fill="#efcb05"/>
<rect x="28" y="307.10" width="34" height="1.20" fill="#efcb05"/><rect x="88" y="307.10" width="34" height="1.20" fill="#efcb05"/>
<rect x="28" y="312.10" width="34" height="2.60" fill="#efcb05"/><rect x="88" y="312.10" width="34" height="2.60" fill="#c0c0c0"/>
<rect x="28" y="355.00" width="34" height="1.20" fill="#efcb05"/><rect x="88" y="355.00" width="34" height="1.20" fill="#efcb05"/>
<rect x="28" y="378.90" width="34" height="1.20" fill="#efcb05"/><rect x="88" y="378.90" width="34" height="1.20" fill="#efcb05"/>
<rect x="28" y="382.80" width="34" height="1.20" fill="#efcb05"/><rect x="88" y="382.80" width="34" height="1.20" fill="#efcb05"/>
<rect x="28" y="430.50" width="34" height="1.30" fill="#efcb05"/><rect x="88" y="430.50" width="34" height="1.30" fill="#efcb05"/>
<rect x="28" y="444.50" width="34" height="1.50" fill="#efd858"/><rect x="88" y="444.50" width="34" height="1.50" fill="#efd858"/>
<rect x="28" y="466.00" width="34" height="5.00" fill="#efcb05"/><rect x="88" y="466.00" width="34" height="5.00" fill="#c0c0c0"/>
<rect x="28" y="466.00" width="34" height="1.10" fill="#efcb05"/><rect x="88" y="466.00" width="34" height="1.10" fill="#efcb05"/>
<rect x="28" y="476.00" width="34" height="2.30" fill="#efcb05"/><rect x="88" y="476.00" width="34" height="2.30" fill="#efcb05"/>
<rect x="28" y="491.00" width="34" height="1.30" fill="#efcb05"/><rect x="88" y="491.00" width="34" height="1.30" fill="#c0c0c0"/>
<rect x="28" y="521.20" width="34" height="1.70" fill="#efd858"/><rect x="88" y="521.20" width="34" height="1.70" fill="#efd858"/>
<rect x="28" y="564.10" width="34" height="1.70" fill="#efd858"/><rect x="88" y="564.10" width="34" height="1.70" fill="#efd858"/>
<rect x="28" y="566.90" width="34" height="1.20" fill="#efcb05"/><rect x="88" y="566.90" width="34" height="1.20" fill="#efcb05"/>
<rect x="28" y="598.00" width="34" height="1.80" fill="#efd858"/><rect x="88" y="598.00" width="34" height="1.80" fill="#efd858"/>
<rect x="28" y="602.10" width="34" height="2.70" fill="#efcb05"/><rect x="88" y="602.10" width="34" height="2.70" fill="#efcb05"/>
<rect x="28" y="620.00" width="34" height="1.20" fill="#efcb05"/><rect x="88" y="620.00" width="34" height="1.20" fill="#efcb05"/>
<rect x="28" y="633.80" width="34" height="1.00" fill="#efcb05"/><rect x="88" y="633.80" width="34" height="1.00" fill="#efcb05"/>
<rect x="28" y="634.80" width="34" height="1.10" fill="#e0605c"/><rect x="88" y="634.80" width="34" height="1.10" fill="#e0605c"/>
<rect x="28" y="637.30" width="34" height="2.70" fill="#efcb05"/><rect x="88" y="637.30" width="34" height="2.70" fill="#efcb05"/>
<rect x="28" y="637.30" width="34" height="1.10" fill="#c0c0c0"/><rect x="88" y="637.30" width="34" height="1.10" fill="#efcb05"/>
<rect x="28" y="642.70" width="34" height="2.00" fill="#efcb05"/><rect x="88" y="642.70" width="34" height="2.00" fill="#efcb05"/>
<rect x="28" y="646.30" width="34" height="16.10" fill="#efcb05"/><rect x="88" y="646.30" width="34" height="16.10" fill="#c0c0c0"/>
<rect x="28" y="670.30" width="34" height="1.10" fill="#efcb05"/><rect x="88" y="670.30" width="34" height="1.10" fill="#efcb05"/>
<rect x="28" y="671.40" width="34" height="1.40" fill="#efd858"/><rect x="88" y="671.40" width="34" height="1.40" fill="#efd858"/>
<rect x="28" y="672.80" width="34" height="1.10" fill="#efcb05"/><rect x="88" y="672.80" width="34" height="1.10" fill="#efcb05"/>
<rect x="28" y="675.10" width="34" height="1.70" fill="#efd858"/><rect x="88" y="675.10" width="34" height="1.70" fill="#c0c0c0"/>
<rect x="28" y="683.20" width="34" height="8.20" fill="#efcb05"/><rect x="88" y="683.20" width="34" height="8.20" fill="#c0c0c0"/>
<rect x="28" y="711.70" width="34" height="1.20" fill="#efcb05"/><rect x="88" y="711.70" width="34" height="1.20" fill="#efcb05"/>
<rect x="28" y="723.30" width="34" height="16.10" fill="#efcb05"/><rect x="88" y="723.30" width="34" height="16.10" fill="#c0c0c0"/>
<rect x="28" y="767.20" width="34" height="1.70" fill="#efd858"/><rect x="88" y="767.20" width="34" height="1.70" fill="#efd858"/>
<rect x="28" y="771.10" width="34" height="3.60" fill="#efcb05"/><rect x="88" y="771.10" width="34" height="3.60" fill="#efcb05"/>
</svg>
<div class="a" style="left:5px;top:631px;width:142.5px;height:11.2px;border-radius:5.5px;background:linear-gradient(to right,rgba(110,110,205,0.27) 0,rgba(110,110,205,0.27) 22.5px,rgba(120,120,200,0.12) 23.5px,rgba(120,120,200,0.12) 56.5px,rgba(120,120,150,0.13) 57.5px,rgba(120,120,150,0.13) 82.5px,rgba(120,120,200,0.12) 83.5px,rgba(120,120,200,0.12) 116.5px,rgba(110,110,205,0.27) 117.5px);"></div>
<svg class="ic" style="left:17.5px;top:631px" width="10" height="10" viewBox="0 0 10 10"><path d="M0.3 0 L1.4 0 L1.4 1.6 L8.8 4.4 L1.4 7.6 L1.4 9 L0.3 9 Z" fill="#7f9cc4"/></svg>
<svg class="ic" style="left:124.5px;top:631px" width="10" height="10" viewBox="0 0 10 10"><path d="M9.3 0 L8.2 0 L8.2 1.6 L0.3 4.4 L8.2 7.6 L8.2 9 L9.3 9 Z" fill="#7f9cc4"/></svg>
<div class="a" style="left:162px;top:142.5px;width:698.4px;height:33.7px;background:#c5d2e3;border-radius:5.5px;box-shadow:0 0.5px 2px rgba(0,0,0,0.16);"></div>
<div class="a" style="left:873px;top:142.5px;width:600px;height:33.7px;background:#d8dee7;border-radius:5.5px;box-shadow:0 0.5px 2px rgba(0,0,0,0.13);"></div>
<div class="t" style="left:313.10px;top:150.67px;font-size:17.6px;line-height:20.222px;color:#0a0a0a;font-weight:bold;transform:scaleX(1.1174);">D:\Temp\WinMerge\2.15.4\Src\Merge.cpp</div>
<div class="t" style="left:1024.80px;top:150.67px;font-size:17.6px;line-height:20.222px;color:#0a0a0a;font-weight:bold;transform:scaleX(1.1180);">D:\Temp\WinMerge\2.15.5\Src\Merge.cpp</div>
<svg class="ic" style="left:839px;top:155px" width="12" height="10" viewBox="0 0 12 10"><path d="M0.3 1.4 H10.6 M0.3 5.1 H10.6 M0.3 8.9 H10.6" stroke="#1c1c22" stroke-width="1.5"/></svg>
<style>.mk{display:inline-block;width:0;height:27.75px;vertical-align:top;position:relative;top:0 !important;}.mk:after{content:"";position:absolute;left:-0.3px;top:0;width:2.5px;height:27.75px;background:#ffaa82;}.k2{color:#0000ff;font-weight:bold;}</style>
<div class="pane" style="left:159px;width:703.6px;">
<svg class="a" style="left:0;top:0" width="720" height="600" viewBox="0 0 720 600"><rect x="0" y="0.65" width="900" height="600" fill="#fff"/><rect x="3.5" y="139.00" width="900" height="27.75" fill="#efcb05"/><rect x="280.30" y="139.00" width="2.5" height="27.75" fill="#ffaa82"/><rect x="3.5" y="194.50" width="900" height="27.75" fill="#ef7774"/><rect x="280.70" y="194.50" width="50.40" height="27.75" fill="#ffa0a0"/><rect x="3.5" y="388.75" width="900" height="27.75" fill="#c0c0c0"/><rect x="3.5" y="416.50" width="900" height="27.75" fill="#efcb05"/><rect x="280.30" y="416.50" width="2.5" height="27.75" fill="#ffaa82"/><rect x="381.10" y="416.50" width="2.5" height="27.75" fill="#ffaa82"/><rect x="393.70" y="416.50" width="2.5" height="27.75" fill="#ffaa82"/><rect x="481.90" y="416.50" width="2.5" height="27.75" fill="#ffaa82"/><rect x="494.50" y="416.50" width="2.5" height="27.75" fill="#ffaa82"/><rect x="607.90" y="416.50" width="2.5" height="27.75" fill="#ffaa82"/><rect x="696.10" y="416.50" width="2.5" height="27.75" fill="#ffaa82"/><rect x="3.5" y="444.25" width="900" height="27.75" fill="#c0c0c0"/><rect x="53.80" y="194.50" width="2" height="27.75" fill="#10888b"/></svg>
<div class="ln" style="left:3.5px;top:0.25px;"><i>            filename </i><i class="o">+=</i><i> timestr</i><i class="o">;</i></div>
<div class="ln" style="left:3.5px;top:28.00px;"><i class="o">        }</i></div>
<div class="ln" style="left:3.5px;top:55.75px;"></div>
<div class="ln" style="left:3.5px;top:83.50px;"><i class="c">        // Append filename and extension (+ optional .bak) to path</i></div>
<div class="ln" style="left:3.5px;top:111.25px;"><i class="k">        if</i><i class="o"> ((</i><i>bakPath</i><i class="o">.</i><i class="f">length</i><i class="o">() + </i><i>filename</i><i class="o">.</i><i class="f">length</i><i class="o">() + </i><i>ext</i><i class="o">.</i><i class="f">length</i><i class="o">())</i></div>
<div class="ln" style="left:3.5px;top:139.00px;"><i>            &lt; </i><i>MAX_PATH</i><i>)</i></div>
<div class="ln" style="left:3.5px;top:166.75px;"><i class="o">        {</i></div>
<div class="ln" style="left:3.5px;top:194.50px;"><i>            success </i><i>= </i><i>TRUE</i><i>;</i></div>
<div class="ln" style="left:3.5px;top:222.25px;"><i>            bakPath </i><i class="o">= </i><i>paths</i><i class="o">::</i><i class="f">ConcatPath</i><i class="o">(</i><i>bakPath</i><i class="o">, </i><i>filename</i><i class="o">, </i><i>ext);</i></div>
<div class="ln" style="left:3.5px;top:250.00px;"><i>            bakPath </i><i class="o">+= </i><i class="f">_T</i><i class="o">(</i><i class="s">&quot;.&quot;</i><i class="o">);</i></div>
<div class="ln" style="left:3.5px;top:277.75px;"><i>            bakPath </i><i class="o">+= </i><i>ext</i><i class="o">;</i></div>
<div class="ln" style="left:3.5px;top:305.50px;"><i class="o">        }</i></div>
<div class="ln" style="left:3.5px;top:333.25px;"></div>
<div class="ln" style="left:3.5px;top:361.00px;"><i class="k">        if</i><i class="o"> (</i><i>success</i><i class="o">)</i></div>
<div class="ln" style="left:3.5px;top:388.75px;"></div>
<div class="ln" style="left:3.5px;top:416.50px;"><i>            success </i><i>= </i><i>CopyFile</i><i>(</i><i>pszPath</i><i>.</i><i>c_str</i><i>(), </i><i>bakPath</i><i>.</i><i>c_str</i><i>(), </i><i>FALSE</i><i>);</i></div>
<div class="ln" style="left:3.5px;top:444.25px;"></div>
<div class="ln" style="left:3.5px;top:472.00px;"></div>
<div class="ln" style="left:3.5px;top:499.75px;"><i class="k">        if</i><i class="o"> (!</i><i>success</i><i class="o">)</i></div>
<div class="ln" style="left:3.5px;top:527.50px;"><i class="o">        {</i></div>
<div class="ln" style="left:3.5px;top:555.25px;"><i>            String msg </i><i class="o">= </i><i>strutils</i><i class="o">::</i><i class="f">format_string1</i><i class="o">(</i></div>
<div class="ln" style="left:3.5px;top:583.00px;"><i class="f">                _</i><i class="o">(</i><i class="s">&quot;Unable to backup original file:\n%1\n\nContinue anyway?&quot;</i><i class="o">),</i></div>
</div>
<div class="pane" style="left:871px;width:600px;">
<svg class="a" style="left:0;top:0" width="720" height="600" viewBox="0 0 720 600"><rect x="0.7" y="0.65" width="900" height="600" fill="#fff"/><rect x="4.2" y="139.00" width="900" height="27.75" fill="#efcb05"/><rect x="281.40" y="139.00" width="63.00" height="27.75" fill="#ffaa82"/><rect x="4.2" y="194.50" width="900" height="27.75" fill="#ef7774"/><rect x="281.40" y="194.50" width="50.40" height="27.75" fill="#ffa0a0"/><rect x="4.2" y="388.75" width="900" height="27.75" fill="#efcb05"/><rect x="4.2" y="416.50" width="900" height="27.75" fill="#efcb05"/><rect x="281.40" y="416.50" width="25.20" height="27.75" fill="#ffaa82"/><rect x="407.40" y="416.50" width="12.60" height="27.75" fill="#ffaa82"/><rect x="432.60" y="416.50" width="63.00" height="27.75" fill="#ffaa82"/><rect x="495.60" y="416.50" width="12.60" height="27.75" fill="#ffaa82"/><rect x="596.40" y="416.50" width="12.60" height="27.75" fill="#ffaa82"/><rect x="621.60" y="416.50" width="88.20" height="27.75" fill="#ffaa82"/><rect x="709.80" y="416.50" width="37.80" height="27.75" fill="#ffaa82"/><rect x="4.2" y="444.25" width="900" height="27.75" fill="#efcb05"/></svg>
<div class="ln" style="left:4.2px;top:0.25px;"><i>            filename </i><i class="o">+=</i><i> timestr</i><i class="o">;</i></div>
<div class="ln" style="left:4.2px;top:28.00px;"><i class="o">        }</i></div>
<div class="ln" style="left:4.2px;top:55.75px;"></div>
<div class="ln" style="left:4.2px;top:83.50px;"><i class="c">        // Append filename and extension (+ optional .bak) to path</i></div>
<div class="ln" style="left:4.2px;top:111.25px;"><i class="k">        if</i><i class="o"> ((</i><i>bakPath</i><i class="o">.</i><i class="f">length</i><i class="o">() + </i><i>filename</i><i class="o">.</i><i class="f">length</i><i class="o">() + </i><i>ext</i><i class="o">.</i><i class="f">length</i><i class="o">())</i></div>
<div class="ln" style="left:4.2px;top:139.00px;"><i>            &lt; </i><i>MAX_PATH</i><i>_FULL</i><i>)</i></div>
<div class="ln" style="left:4.2px;top:166.75px;"><i class="o">        {</i></div>
<div class="ln" style="left:4.2px;top:194.50px;"><i>            success </i><i>= </i><i>true</i><i>;</i></div>
<div class="ln" style="left:4.2px;top:222.25px;"><i>            bakPath </i><i class="o">= </i><i>paths</i><i class="o">::</i><i class="f">ConcatPath</i><i class="o">(</i><i>bakPath</i><i class="o">, </i><i>filename</i><i class="o">, </i><i>ext);</i></div>
<div class="ln" style="left:4.2px;top:250.00px;"><i>            bakPath </i><i class="o">+= </i><i class="f">_T</i><i class="o">(</i><i class="s">&quot;.&quot;</i><i class="o">);</i></div>
<div class="ln" style="left:4.2px;top:277.75px;"><i>            bakPath </i><i class="o">+= </i><i>ext</i><i class="o">;</i></div>
<div class="ln" style="left:4.2px;top:305.50px;"><i class="o">        }</i></div>
<div class="ln" style="left:4.2px;top:333.25px;"></div>
<div class="ln" style="left:4.2px;top:361.00px;"><i class="k">        if</i><i class="o"> (</i><i>success</i><i class="o">)</i></div>
<div class="ln" style="left:4.2px;top:388.75px;"><i>        {</i></div>
<div class="ln" style="left:4.2px;top:416.50px;"><i>            success </i><i>= </i><i>!!</i><i>CopyFile</i><i>W</i><i>(</i><i>TFile</i><i>(</i><i>pszPath</i><i>)</i><i>.</i><i>wstring</i><i>().</i><i>c_str</i><i>(), </i></div>
<div class="ln" style="left:4.2px;top:444.25px;"><i>        }</i></div>
<div class="ln" style="left:4.2px;top:472.00px;"></div>
<div class="ln" style="left:4.2px;top:499.75px;"><i class="k">        if</i><i class="o"> (!</i><i>success</i><i class="o">)</i></div>
<div class="ln" style="left:4.2px;top:527.50px;"><i class="o">        {</i></div>
<div class="ln" style="left:4.2px;top:555.25px;"><i>            String msg </i><i class="o">= </i><i>strutils</i><i class="o">::</i><i class="f">format_string1</i><i class="o">(</i></div>
<div class="ln" style="left:4.2px;top:583.00px;"><i class="f">                _</i><i class="o">(</i><i class="s">&quot;Unable to backup original file:\n%1\n\nContinue anyway?&quot;</i><i class="o">),</i></div>
</div>
<div class="a" style="left:862.7px;top:184.5px;width:8.9px;height:600px;background:linear-gradient(to right,#e8e8e8 0,#efefef 1.5px,#f0f0f0 7.4px,#eaeaea 8.9px);"></div>
</body></html>
